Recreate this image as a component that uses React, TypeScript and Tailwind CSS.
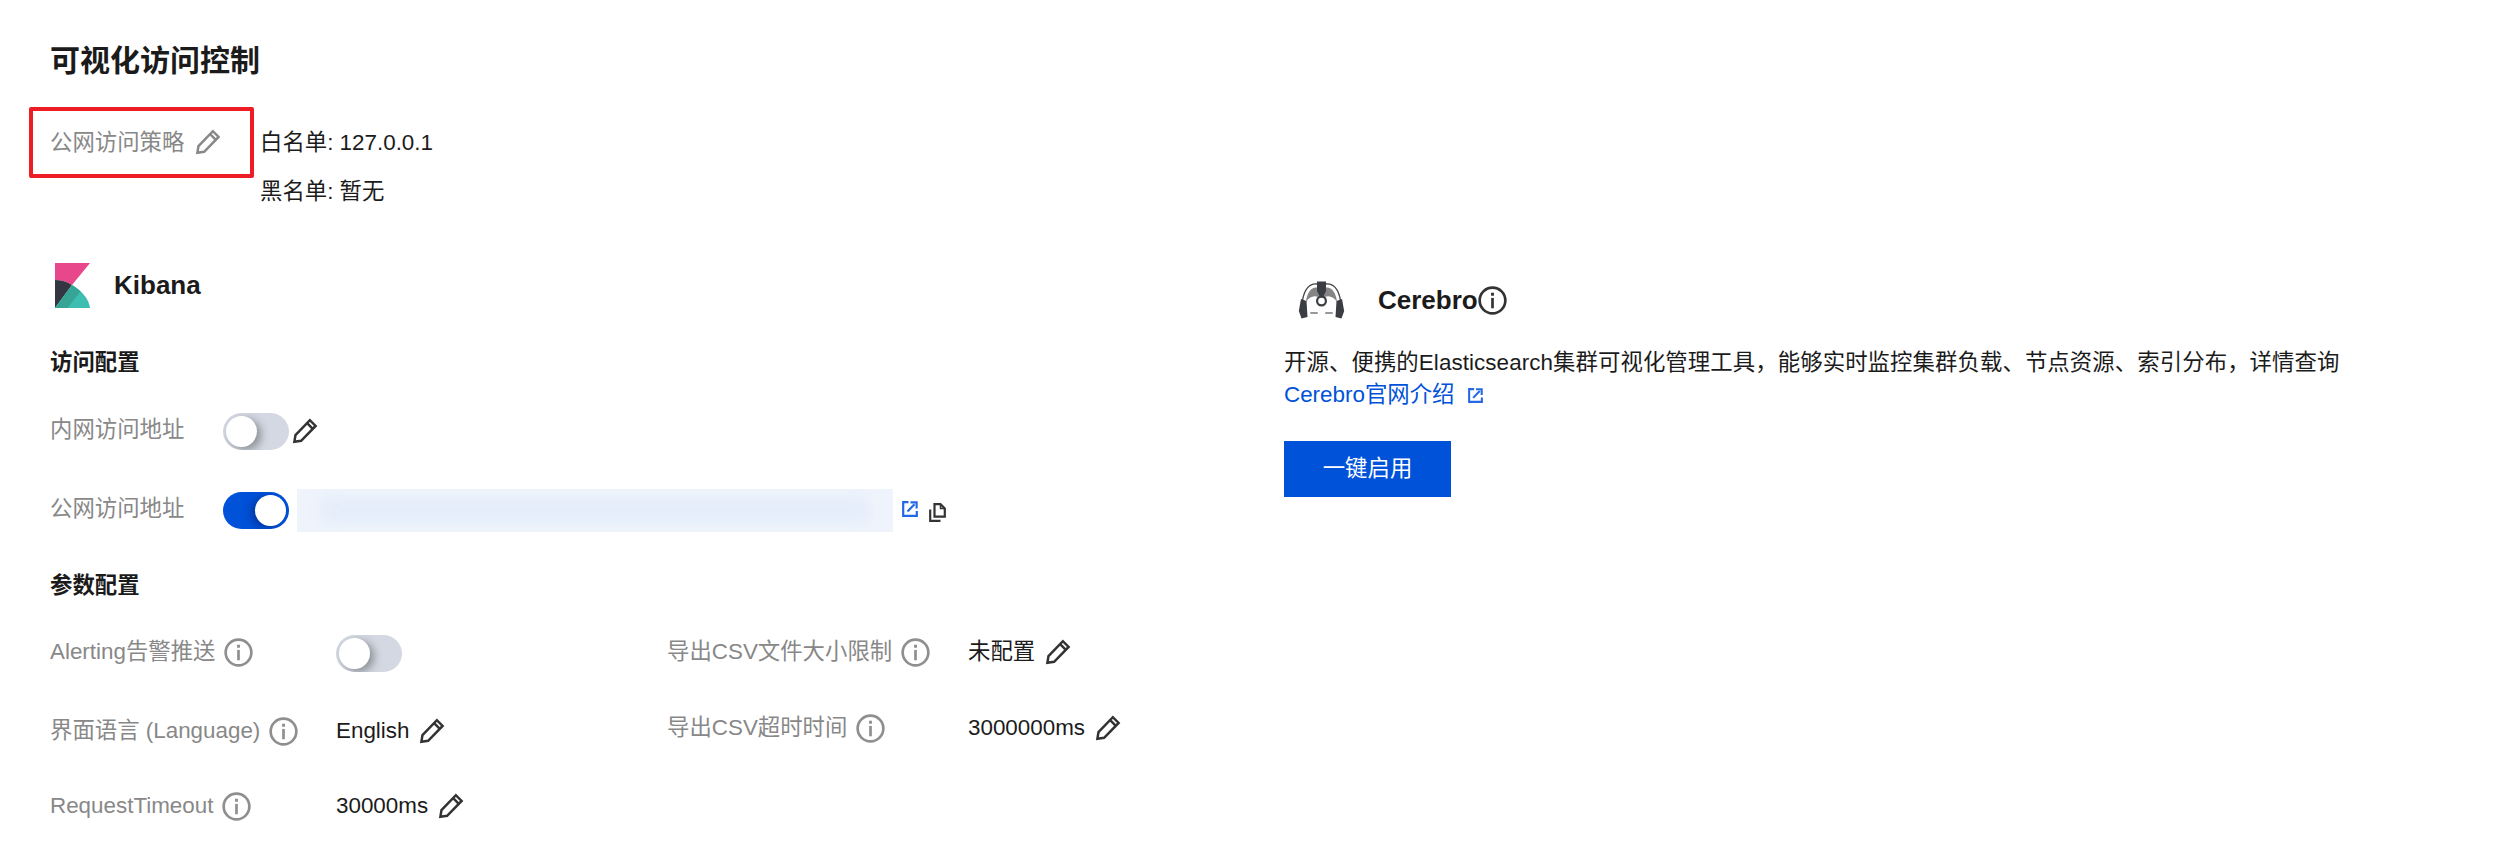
import type { ReactNode } from 'react';

const sans = 'font-["Liberation_Sans","Noto_Sans_CJK_SC",sans-serif]';

function Pencil({ className = 'text-[#333]' }: { className?: string }) {
  return (
    <svg viewBox="0 0 24 24" className={`w-[26px] h-[26px] shrink-0 ${className}`} fill="none" stroke="currentColor" strokeWidth="2.3">
      <path d="M2.2 22 L3.2 15.8 L16.5 2 L21.8 7.3 L8.4 21 Z" strokeLinejoin="miter" />
      <path d="M14 4.8 L19.2 10" />
    </svg>
  );
}

function Info({ className = 'text-[#8f8f8f]' }: { className?: string }) {
  return (
    <svg viewBox="0 0 28 28" className={`w-[29px] h-[29px] shrink-0 ${className}`} fill="none" stroke="currentColor">
      <circle cx="14" cy="14" r="12.4" strokeWidth="2.6" />
      <path d="M14 11.5 V21.5" strokeWidth="2.6" />
      <path d="M14 6.5 V9.4" strokeWidth="2.8" />
    </svg>
  );
}

function OpenLink({ size = 'w-[16px] h-[16px]' }: { size?: string }) {
  return (
    <svg viewBox="0 0 16 16" className={`${size} shrink-0 text-[#2468e5]`} fill="none" stroke="currentColor" strokeWidth="2.2">
      <path d="M6.5 1.2 H1.2 V14.8 H14.8 V10" />
      <path d="M5.5 10.5 L12.5 3.2" />
      <path d="M8.5 1.4 H14.6 V7.5" strokeWidth="2.2" />
    </svg>
  );
}

function CopyIcon() {
  return (
    <svg viewBox="0 0 17 19" className="w-[17px] h-[19px] shrink-0 text-[#333]" fill="none" stroke="currentColor" strokeWidth="2.2">
      <path d="M5.5 1.2 H11.5 L15.8 5.5 V13.6 H5.5 Z" />
      <path d="M11.5 1.2 V5.5 H15.8" strokeWidth="1.5" />
      <path d="M1.2 6.5 V17.8 H11.5" />
    </svg>
  );
}

function Toggle({ on = false }: { on?: boolean }) {
  return (
    <div className={`w-[66px] h-[37px] rounded-full flex items-center shrink-0 px-[3px] overflow-hidden ${on ? 'bg-[#0052d9] justify-end' : 'bg-[#d3d8e2] justify-start'}`}>
      <div className={`w-[31px] h-[31px] rounded-full bg-white ${on ? 'shadow-[-4px_2px_8px_rgba(0,30,110,0.5)]' : 'shadow-[4px_3px_8px_rgba(0,0,0,0.35)]'}`} />
    </div>
  );
}

function KibanaLogo() {
  return (
    <svg viewBox="0 0 35 45" className="w-[35px] h-[45px] shrink-0">
      <path d="M0 0 H35 L17 22 C12 18.5 6 17 0 17 Z" fill="#e8488b" />
      <path d="M0 17 C6 17 12 18.5 17 22 L0 45 Z" fill="#343741" />
      <path d="M17 22 C27 28 34 36 35 45 H0 Z" fill="#3ebeb0" />
      <path d="M17 22 C20 23.8 23 26 25.5 28.5 L12.5 45 H0 Z" fill="#37a595" />
    </svg>
  );
}

function CerebroLogo() {
  return (
    <svg viewBox="0 0 47 38" className="w-[47px] h-[38px] shrink-0" fill="none">
      <path d="M8 21 C9 10 15 5 20 7 L27 7 C32 5 38 10 39 21 C36 16 31 14 27 16 L20 16 C16 14 11 16 8 21 Z" fill="#858585" />
      <path d="M4.5 20 C6 8 12 2 19 3 M42.5 20 C41 8 35 2 28 3" stroke="#444" strokeWidth="1.3" />
      <path d="M19 0.5 H28 V10 L25.5 15 H21.5 L19 10 Z" fill="#3a3d42" />
      <circle cx="23.5" cy="20" r="4.4" fill="#fff" stroke="#3a3d42" strokeWidth="2.2" />
      <path d="M3 18 L8.5 20 L9.5 36 L3.5 37.5 L0.8 30 Z" fill="#3a3d42" />
      <path d="M44 18 L38.5 20 L37.5 36 L43.5 37.5 L46.2 30 Z" fill="#3a3d42" />
      <path d="M13 32 H19 M28 32 H34" stroke="#999" strokeWidth="2" strokeLinecap="round" />
    </svg>
  );
}

function Row({ label, labelWidth, info, children, height }: { label: string; labelWidth: string; info?: boolean; children: ReactNode; height: string }) {
  return (
    <div className={`flex items-center ${height}`}>
      <div className={`flex items-center gap-[9px] text-[#888] ${labelWidth}`}>
        <span>{label}</span>
        {info && <Info />}
      </div>
      {children}
    </div>
  );
}

export default function App() {
  return (
    <div className={`w-[2518px] h-[850px] overflow-hidden bg-white pl-[50px] pt-[42px] text-[22.4px] leading-[32px] text-[#1b1b1b] ${sans}`}>
      <h1 className="text-[30px] leading-[38px] font-bold">可视化访问控制</h1>

      <div className="flex mt-[27px] -ml-[21px]">
        <div className="w-[225px] h-[71px] border-4 border-[#ee1c25] rounded-[2px] pl-[17px] pt-[16px] flex items-start gap-[11px] text-[#888] shrink-0">
          <span>公网访问策略</span>
          <span className="mt-[2px]"><Pencil className="text-[#888]" /></span>
        </div>
        <div className="ml-[6px] pt-[20px]">
          <p>白名单: 127.0.0.1</p>
          <p className="mt-[17px]">黑名单: 暂无</p>
        </div>
      </div>

      <div className="flex mt-[55px]">
        <div className="w-[1234px] shrink-0">
          <div className="flex items-center ml-[5px] h-[45px] gap-[24px]">
            <KibanaLogo />
            <span className="text-[26px] font-bold pb-[2px]">Kibana</span>
          </div>

          <h2 className="font-bold mt-[39px]">访问配置</h2>
          <Row label="内网访问地址" labelWidth="w-[173px] pb-[3px]" height="h-[40px] mt-[32px]">
            <Toggle />
            <span className="ml-[3px]"><Pencil /></span>
          </Row>
          <div className="flex items-center mt-[37px] h-[44px]">
            <span className="w-[173px] text-[#888] pb-[3px]">公网访问地址</span>
            <Toggle on />
            <div className="w-[596px] h-[43px] ml-[8px] bg-[#eff4fc] overflow-hidden px-[24px] py-[10px]">
              <div className="h-full bg-[#e3ecfa] blur-[8px]" />
            </div>
            <span className="ml-[9px] -mt-[3px]"><OpenLink /></span>
            <span className="ml-[11px] mt-[4px]"><CopyIcon /></span>
          </div>

          <h2 className="font-bold mt-[38px]">参数配置</h2>

          <div className="flex mt-[30px]">
            <div className="w-[617px] shrink-0">
              <Row label="Alerting告警推送" labelWidth="w-[286px]" info height="h-[40px]">
                <span className="mt-[3px]"><Toggle /></span>
              </Row>
              <Row label="界面语言 (Language)" labelWidth="w-[286px]" info height="h-[40px] mt-[39px]">
                <span>English</span>
                <span className="ml-[10px]"><Pencil /></span>
              </Row>
              <Row label="RequestTimeout" labelWidth="w-[286px]" info height="h-[40px] mt-[35px]">
                <span>30000ms</span>
                <span className="ml-[10px]"><Pencil /></span>
              </Row>
            </div>
            <div>
              <Row label="导出CSV文件大小限制" labelWidth="w-[301px]" info height="h-[40px]">
                <span>未配置</span>
                <span className="ml-[10px]"><Pencil /></span>
              </Row>
              <Row label="导出CSV超时时间" labelWidth="w-[301px]" info height="h-[40px] mt-[36px]">
                <span>3000000ms</span>
                <span className="ml-[10px]"><Pencil /></span>
              </Row>
            </div>
          </div>
        </div>

        <div className="w-[1100px] pt-[14px]">
          <div className="flex items-center h-[46px] ml-[14px]">
            <CerebroLogo />
            <span className="ml-[33px] text-[26px] font-bold">Cerebro</span>
            <Info className="text-[#333]" />
          </div>
          <p className="mt-[24px] tracking-[0.08px]">开源、便携的Elasticsearch集群可视化管理工具，能够实时监控集群负载、节点资源、索引分布，详情查询</p>
          <a className="flex items-center gap-[14px] text-[#0052d9]">
            Cerebro官网介绍
            <OpenLink size="w-[15px] h-[15px]" />
          </a>
          <button className="mt-[30px] w-[167px] h-[56px] bg-[#0052d9] text-white">一键启用</button>
        </div>
      </div>
    </div>
  );
}
